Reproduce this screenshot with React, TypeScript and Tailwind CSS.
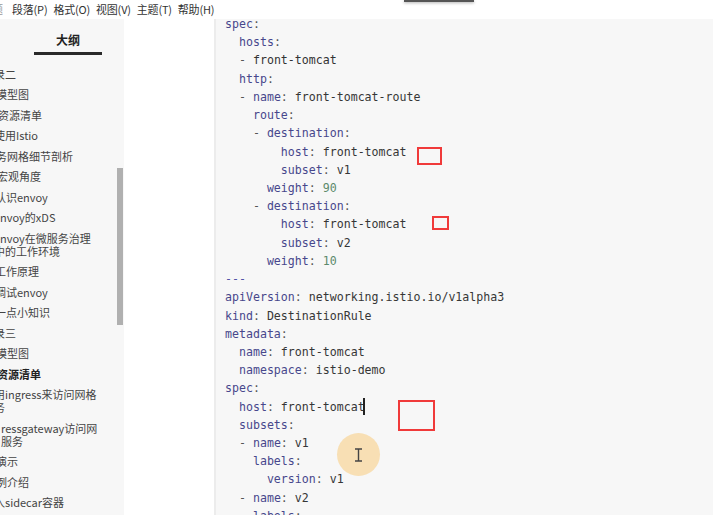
import React from 'react';

const menuItems = ['段落(P)', '格式(O)', '视图(V)', '主题(T)', '帮助(H)'];

// outline entries: lines + left offset (text is clipped by the window edge)
const outline: { lines: string[]; offset: string; bold?: boolean }[] = [
  { lines: ['录二'], offset: '-ml-[6px]' },
  { lines: ['模型图'], offset: '-ml-[4px]' },
  { lines: ['资源清单'], offset: '-ml-[2px]' },
  { lines: ['使用Istio'], offset: '-ml-[6px]' },
  { lines: ['务网格细节剖析'], offset: '-ml-[4px]' },
  { lines: ['宏观角度'], offset: '-ml-[3px]' },
  { lines: ['认识envoy'], offset: '-ml-[5px]' },
  { lines: ['envoy的xDS'], offset: '-ml-[6px]' },
  { lines: ['envoy在微服务治理', '中的工作环境'], offset: '-ml-[6px]' },
  { lines: ['工作原理'], offset: '-ml-[5px]' },
  { lines: ['调试envoy'], offset: '-ml-[5px]' },
  { lines: ['一点小知识'], offset: '-ml-[5px]' },
  { lines: ['录三'], offset: '-ml-[6px]' },
  { lines: ['模型图'], offset: '-ml-[4px]' },
  { lines: ['资源清单'], offset: '-ml-[3px]', bold: true },
  { lines: ['用ingress来访问网格', '务'], offset: '-ml-[6px]' },
  { lines: ['ressgateway访问网', '服务'], offset: 'ml-[1px]' },
  { lines: ['演示'], offset: '-ml-[4px]' },
  { lines: ['例介绍'], offset: '-ml-[4px]' },
  { lines: ['入sidecar容器'], offset: '-ml-[6px]' },
];

const code = `spec:
  hosts:
  - front-tomcat
  http:
  - name: front-tomcat-route
    route:
    - destination:
        host: front-tomcat
        subset: v1
      weight: 90
    - destination:
        host: front-tomcat
        subset: v2
      weight: 10
---
apiVersion: networking.istio.io/v1alpha3
kind: DestinationRule
metadata:
  name: front-tomcat
  namespace: istio-demo
spec:
  host: front-tomcat
  subsets:
  - name: v1
    labels:
      version: v1
  - name: v2
    labels:`.split('\n');

function CodeLine({ line }: { line: string }) {
  if (line === '---') return <div className="text-[#5353a8]">---</div>;
  const m = line.match(/^(\s*)(- )?([^:]*?)(:)?( .*)?$/);
  if (!m) return <div>{line}</div>;
  const [, indent, dash, key, colon, value] = m;
  if (!colon) {
    return (
      <div>
        {indent}
        {dash && <span className="text-[#555]">{dash}</span>}
        <span className="text-[#333]">{key}</span>
      </div>
    );
  }
  const num = value && /^\s*\d+$/.test(value);
  return (
    <div>
      {indent}
      {dash && <span className="text-[#555]">{dash}</span>}
      <span className="text-[#47478c]">{key}</span>
      <span className="text-[#555]">:</span>
      {value && <span className={num ? 'text-[#5c8a6c]' : 'text-[#363636]'}>{value}</span>}
    </div>
  );
}

export default function App() {
  return (
    <div className="relative w-[713px] h-[515px] overflow-hidden bg-white font-['Noto_Sans_CJK_SC',sans-serif]">
      {/* menu bar */}
      <div className="h-[19px] flex items-center text-[11px] text-[#333] leading-[19px]">
        <span className="-ml-[8px] w-[11px] overflow-hidden text-[#999]">题</span>
        <div className="flex gap-[6px] ml-[9px] tracking-[-0.2px]">
          {menuItems.map((m) => (
            <span key={m}>{m}</span>
          ))}
        </div>
      </div>

      <div className="flex h-[496px]">
        {/* outline sidebar */}
        <aside className="w-[124px] bg-[#f7f7f7] flex overflow-hidden">
          <div className="flex-1 min-w-0">
            <div className="pt-[13px] pl-[34px]">
              <div className="w-[68px] text-center text-[12px] font-bold leading-[16px] text-[#222]">大纲</div>
              <div className="w-[68px] h-[3px] mt-[4px] bg-[#2a2a2a]" />
            </div>
            <div className="mt-[9px] text-[11px] leading-[13px] text-[#444] whitespace-nowrap">
              {outline.map((item, i) => (
                <div key={i} className={`py-[3.75px] ${item.offset} ${item.bold ? 'font-bold text-[#222]' : ''}`}>
                  {item.lines.map((l) => (
                    <div key={l}>{l}</div>
                  ))}
                </div>
              ))}
            </div>
          </div>
          <div className="w-[7px] pr-[1px] flex flex-col">
            <div className="mt-[149px] h-[157px] bg-[#b0b0b0]" />
          </div>
        </aside>

        <div className="w-[90px] bg-white" />

        {/* code block */}
        <div className="flex-1 bg-[#f7f7f7] border-l-2 border-[#ececec] overflow-hidden pl-[9px]">
          <div className="-mt-[4px] font-['DejaVu_Sans_Mono',monospace] text-[11.6px] leading-[18.22px] whitespace-pre">
            {code.map((l, i) => (
              <CodeLine key={i} line={l} />
            ))}
          </div>
        </div>
      </div>

      {/* popup edge at the top */}
      <div className="absolute left-[404px] top-0 w-[70px] h-[2px] bg-[#555] shadow-[0_1px_3px_rgba(0,0,0,0.35)]" />

      {/* red annotation boxes */}
      <div className="absolute left-[417px] top-[147px] w-[25px] h-[18px] border-2 border-[#f03a3a]" />
      <div className="absolute left-[432px] top-[216px] w-[17px] h-[14px] border-2 border-[#f03a3a]" />
      <div className="absolute left-[398px] top-[400px] w-[37px] h-[31px] border-2 border-[#f03a3a]" />

      {/* text caret */}
      <div className="absolute left-[363px] top-[398px] w-[1.5px] h-[17px] bg-[#222]" />

      {/* mouse highlight with I-beam */}
      <div className="absolute left-[337px] top-[433px] w-[43px] h-[43px] rounded-full bg-[#f8dfb4] flex items-center justify-center">
        <svg width="9" height="14" viewBox="0 0 9 14" fill="none" stroke="#444" strokeWidth="1.4">
          <path d="M1 1h7M1 13h7M4.5 1v12" />
        </svg>
      </div>
    </div>
  );
}
